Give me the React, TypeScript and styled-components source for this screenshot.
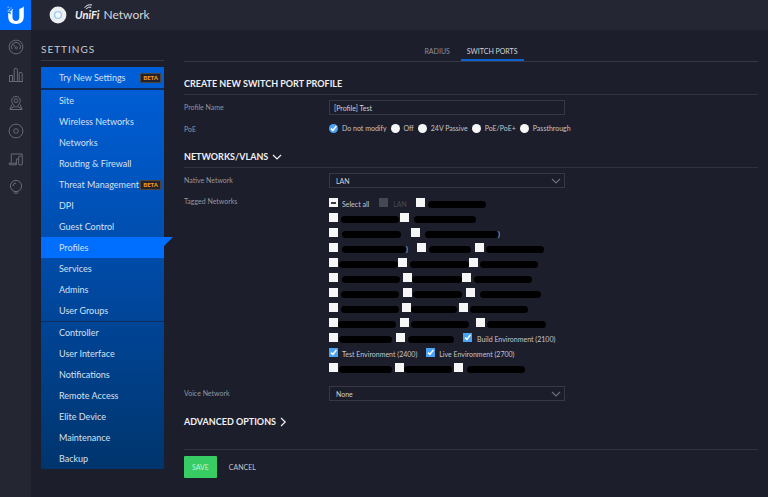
import React from "react";
import styled, { createGlobalStyle, css } from "styled-components";

const GlobalStyle = createGlobalStyle`
  *, *::before, *::after { box-sizing: border-box; }
  body {
    margin: 0;
    background: #1c1e2c;
    color: #c3c5cb;
    font-family: Lato, "Open Sans", sans-serif;
    font-size: 7px;
    line-height: 12px;
  }
  button, input, select { font: inherit; color: inherit; margin: 0; }
  ul { list-style: none; margin: 0; padding: 0; }
`;

const Shell = styled.div`
  display: grid;
  grid-template-columns: 31px minmax(0, 1fr);
  min-height: 100vh;
`;

const Rail = styled.nav`
  display: flex;
  flex-direction: column;
  align-items: center;
  background: #242632;
`;

const BrandLink = styled.a`
  display: flex;
  align-items: center;
  justify-content: center;
  width: 100%;
  height: 30px;
  margin-bottom: 3px;
  background: #006fff;
`;

const RailLink = styled.a`
  display: flex;
  align-items: center;
  justify-content: center;
  width: 100%;
  height: 28px;
  color: #686a75;
`;

const Header = styled.header`
  display: flex;
  align-items: center;
  gap: 8px;
  height: 30px;
  padding-left: 18px;
  background: #242634;
`;

const Product = styled.div`
  display: flex;
  align-items: baseline;
  gap: 4px;
  color: #d6d7da;
  font-size: 12px;
  line-height: 16px;
`;

const Wordmark = styled.span`
  position: relative;
  color: #f1f1f3;
  font-size: 11px;
  font-style: italic;
  font-weight: 700;

  svg {
    position: absolute;
    top: -3px;
    left: 9px;
  }
`;

const Body = styled.div`
  display: grid;
  grid-template-columns: 123px minmax(0, 1fr);
  gap: 20px;
  padding: 0 10px;
`;

const Sidebar = styled.aside`
  padding-top: 12px;
`;

const SidebarTitle = styled.h1`
  margin: 0 0 6px;
  padding-bottom: 4px;
  border-bottom: 1px solid #373944;
  color: #c9cace;
  font-size: 10px;
  font-weight: 400;
  letter-spacing: 1px;
  line-height: 14px;
`;

const Menu = styled.div`
  background: linear-gradient(#005fd9, #0056c2 25%, #0048a0 55%, #00356d);
`;

const MenuGroup = styled.ul<{ $rule?: number }>`
  border-bottom: ${(p) => p.$rule ?? 0}px solid #0b2c5c;
`;

const MenuLink = styled.a<{ $active?: boolean }>`
  position: relative;
  display: flex;
  align-items: center;
  justify-content: space-between;
  height: 21px;
  padding: 0 3px 0 18px;
  color: #d5e0f1;
  font-size: 9px;
  text-decoration: none;
  white-space: nowrap;

  ${(p) =>
    p.$active &&
    css`
      background: #006fff;

      &::after {
        content: "";
        position: absolute;
        top: 0;
        left: 100%;
        border-top: 9px solid #006fff;
        border-right: 9px solid transparent;
      }
    `}
`;

const Beta = styled.span`
  padding: 0 2px;
  border: 1px solid #4f4433;
  border-radius: 1px;
  background: #202230;
  color: #f09a14;
  font-size: 6px;
  font-weight: 900;
  line-height: 8px;
`;

const Content = styled.main`
  min-width: 0;
`;

const Tabs = styled.div`
  display: flex;
  justify-content: center;
  gap: 5px;
  padding-top: 15px;
  border-bottom: 1px solid #363843;
`;

const Tab = styled.button<{ $active?: boolean }>`
  padding: 0 6px 1px;
  border: 0;
  border-bottom: 2px solid ${(p) => (p.$active ? "#0d62d2" : "transparent")};
  background: none;
  color: ${(p) => (p.$active ? "#d3d4d9" : "#8d8f98")};
  line-height: 13px;
`;

const SectionTitle = styled.h2<{ $ruled?: boolean; $top: number }>`
  display: flex;
  align-items: center;
  margin: ${(p) => p.$top}px 0 0;
  padding-bottom: 3px;
  border-bottom: 1px solid ${(p) => (p.$ruled ? "#30323e" : "transparent")};
  color: #f0f0f2;
  font-size: 9px;
  font-weight: 700;
  line-height: 14px;
`;

const Toggle = styled.button`
  display: flex;
  align-items: center;
  gap: 4px;
  padding: 0;
  border: 0;
  background: none;
  line-height: 14px;
`;

const Field = styled.div<{ $top: number }>`
  display: grid;
  grid-template-columns: 145px minmax(0, 1fr);
  align-items: start;
  margin-top: ${(p) => p.$top}px;
`;

const fieldName = css`
  padding-top: 1px;
  color: #94969f;
`;

const FieldLabel = styled.label`
  ${fieldName}
`;

const GroupLabel = styled.span`
  ${fieldName}
`;

const control = css`
  width: 100%;
  height: 15px;
  border: 1px solid #363844;
  border-radius: 0;
  outline: 0;
  background: #1b1d2b;
  color: #d0d2d6;
`;

const TextInput = styled.input`
  ${control}
  max-width: 236px;
  padding: 0 4px;
`;

const SelectBox = styled.div`
  position: relative;
  max-width: 236px;
  height: 15px;

  svg {
    position: absolute;
    top: 5px;
    right: 4px;
    color: #6c6e79;
    pointer-events: none;
  }
`;

const Select = styled.select`
  ${control}
  appearance: none;
  padding: 0 6px;
`;

const tick =
  "url(\"data:image/svg+xml,%3Csvg xmlns='http://www.w3.org/2000/svg' viewBox='0 0 9 9'%3E%3Cpath d='M2 4.6 3.9 6.4 7.4 2' fill='none' stroke='white' stroke-width='1.5'/%3E%3C/svg%3E\")";

const Radio = styled.input.attrs({ type: "radio" })`
  appearance: none;
  flex: none;
  width: 9px;
  height: 9px;
  border-radius: 50%;
  background: #f6f6f7;

  &:checked {
    background: ${tick} #4ba3f5;
  }
`;

const Check = styled.input.attrs({ type: "checkbox" })`
  appearance: none;
  flex: none;
  width: 9px;
  height: 9px;
  background: #f6f6f7;

  &:checked {
    background: ${tick} #4ba3f5;
  }
  &:indeterminate {
    background: linear-gradient(#3b3c45, #3b3c45) center / 5px 2px no-repeat #f6f6f7;
  }
  &:disabled {
    background: #454751;
  }
`;

const RadioRow = styled.div`
  display: flex;
  gap: 4px;
`;

const RadioLabel = styled.label`
  display: flex;
  align-items: center;
  gap: 4px;
  white-space: nowrap;
`;

const Options = styled.div`
  display: grid;
  grid-auto-rows: 15px;
  padding-top: 4px;
`;

const OptionRow = styled.div`
  display: flex;
  align-items: flex-start;
`;

const Option = styled.label<{ $lead: number; $gap: number; $muted?: boolean }>`
  display: flex;
  gap: ${(p) => p.$gap}px;
  margin-left: ${(p) => p.$lead}px;
  color: ${(p) => (p.$muted ? "#484a55" : "inherit")};
  white-space: nowrap;
`;

const OptionText = styled.span`
  padding-top: 1px;
  line-height: 10px;
`;

const Redacted = styled.span<{ $width: number }>`
  width: ${(p) => p.$width}px;
  height: 7px;
  margin-top: 3px;
  border-radius: 4px;
  background: #000;
`;

const Spacer = styled.span<{ $width: number }>`
  width: ${(p) => p.$width}px;
`;

const Actions = styled.div`
  display: flex;
  align-items: center;
  gap: 12px;
  margin-top: 16px;
  padding: 6px 0 16px;
  border-top: 1px solid #30323e;
`;

const SaveButton = styled.button`
  height: 22px;
  padding: 0 8px;
  border: 0;
  border-radius: 1px;
  background: #38cc65;
  color: #c4f2d1;
`;

const CancelButton = styled.button`
  padding: 0;
  border: 0;
  background: none;
`;

type MenuItem = { label: string; beta?: boolean; active?: boolean };

const menu: { rule?: number; items: MenuItem[] }[] = [
  { rule: 2, items: [{ label: "Try New Settings", beta: true }] },
  {
    rule: 1,
    items: [
      { label: "Site" },
      { label: "Wireless Networks" },
      { label: "Networks" },
      { label: "Routing & Firewall" },
      { label: "Threat Management", beta: true },
      { label: "DPI" },
      { label: "Guest Control" },
      { label: "Profiles", active: true },
      { label: "Services" },
      { label: "Admins" },
      { label: "User Groups" },
    ],
  },
  {
    items: [
      { label: "Controller" },
      { label: "User Interface" },
      { label: "Notifications" },
      { label: "Remote Access" },
      { label: "Elite Device" },
      { label: "Maintenance" },
      { label: "Backup" },
    ],
  },
];

type Network = {
  lead?: number;
  gap?: number;
  text?: string;
  hidden?: number;
  state?: "checked" | "mixed" | "disabled";
};

const networks: Network[][] = [
  [
    { text: "Select all", gap: 4, state: "mixed" },
    { text: "LAN", lead: 10, gap: 5, state: "disabled" },
    { hidden: 58, lead: 9, gap: 3 },
  ],
  [{ hidden: 58, gap: 3 }, { hidden: 62, lead: 1, gap: 5 }],
  [{ hidden: 59, gap: 4 }, { hidden: 73, lead: 10, gap: 5, text: ")" }],
  [{ hidden: 64, gap: 4, text: ")" }, { hidden: 42, lead: 9, gap: 3 }, { hidden: 58, lead: 4, gap: 2 }],
  [{ hidden: 59, gap: 1 }, { hidden: 59, gap: 3 }, { hidden: 58, gap: 2 }],
  [{ hidden: 58, gap: 4 }, { hidden: 50, lead: 3, gap: 0 }, { hidden: 58, gap: 3 }],
  [{ hidden: 58, gap: 3 }, { hidden: 49, lead: 4, gap: 1 }, { hidden: 61, lead: 4, gap: 5 }],
  [{ hidden: 58, gap: 3 }, { hidden: 46, lead: 3, gap: 0 }, { hidden: 58, lead: 2, gap: 2 }],
  [{ hidden: 58, gap: 0 }, { hidden: 58, lead: 4, gap: 2 }, { hidden: 59, lead: 7, gap: 2 }],
  [
    { hidden: 53, gap: 1 },
    { hidden: 46, lead: 4, gap: 3 },
    { text: "Build Environment (2100)", lead: 9, gap: 5, state: "checked" },
  ],
  [
    { text: "Test Environment (2400)", gap: 4, state: "checked" },
    { text: "Live Environment (2700)", lead: 9, gap: 4, state: "checked" },
  ],
  [{ hidden: 53, gap: 1 }, { hidden: 48, lead: 3, gap: 0 }, { hidden: 58, lead: 2, gap: 4 }],
];

const poeModes = ["Do not modify", "Off", "24V Passive", "PoE/PoE+", "Passthrough"];

const Chevron = ({ right = false }: { right?: boolean }) => (
  <svg width={right ? 7 : 10} height={right ? 10 : 6} viewBox={right ? "0 0 7 10" : "0 0 10 6"} fill="none" stroke="currentColor">
    <path d={right ? "M1 1 5.2 5 1 9" : "M1 1 5 5 9 1"} strokeWidth="1.2" />
  </svg>
);

const railIcons: { name: string; art: React.ReactNode }[] = [
  {
    name: "Dashboard",
    art: (
      <>
        <circle cx="8" cy="8" r="6.9" />
        <path d="M4.2 10.3A4.5 4.5 0 1 1 11.8 10.3M5 5.5 7.6 8" />
        <circle cx="8.4" cy="8.8" r="1.1" />
      </>
    ),
  },
  {
    name: "Statistics",
    art: (
      <>
        <rect x="1.5" y="8.5" width="3" height="6" />
        <rect x="6.2" y="1.5" width="3.2" height="13" rx="0.8" />
        <rect x="11.2" y="5.5" width="3" height="9" rx="0.8" />
        <path d="M1 14.5H15" />
      </>
    ),
  },
  {
    name: "Map",
    art: (
      <>
        <path d="M8 12.5C5.2 9.8 3.7 7.8 3.7 5.6A4.3 4.3 0 0 1 12.3 5.6C12.3 7.8 10.8 9.8 8 12.5Z" />
        <circle cx="8" cy="5.7" r="1.9" />
        <path d="M4 9.5 1.8 14.5H14.2L12 9.5M2.5 13.8 6.5 11.2M13.5 13.8 9.5 11.2" />
      </>
    ),
  },
  {
    name: "Devices",
    art: (
      <>
        <circle cx="8" cy="8" r="6.9" />
        <circle cx="8" cy="8" r="2.3" />
      </>
    ),
  },
  {
    name: "Clients",
    art: (
      <>
        <path d="M3.3 11.8V3H14.2V5M1 12.2H8V13.8H2Q1 13.8 1 12.2Z" />
        <rect x="10.7" y="5.2" width="3.6" height="8.6" rx="0.6" />
        <path d="M8.4 13.8V8.1H10.7" />
      </>
    ),
  },
  {
    name: "Insights",
    art: (
      <>
        <circle cx="8" cy="7" r="5.6" />
        <path d="M6 12.3 6.7 14.3H9.3L10 12.3M5 7A3 3 0 0 1 8 4" />
      </>
    ),
  },
];

const BrandMark = () => (
  <svg width="20" height="20" viewBox="0 0 18 18" fill="#fff">
    <path d="M5.8 5V10.5C5.8 12.8 6.8 14.2 9 14.5 11.2 14.2 12 12.8 12 10.5V3.6C13.5 3.4 15 2.5 16 1.2V10.5C16 14.8 13.2 17 9.1 17 4.8 17 2 14.8 2 10.5V7.2H3.2V8.4H4.2V5Z" />
    <path d="M1.5 1.5h1v1h-1zM4 2.2h1v1H4zM2.5 3.5h1.2v1.2H2.5zM1.5 5h1v1h-1zM5.2 3.6h1v1.4h-1zM3.2 5.4h1v1h-1z" opacity="0.8" />
  </svg>
);

const AccessPoint = () => (
  <svg width="18" height="18" viewBox="0 0 18 18">
    <circle cx="9" cy="9" r="8.4" fill="#edeef0" />
    <circle cx="9" cy="9" r="3.4" fill="#f4f8fc" stroke="#9dcdf3" strokeWidth="1.4" />
  </svg>
);

const NetworkOption = ({ lead = 0, gap = 0, text, hidden, state }: Network) => (
  <Option $lead={lead} $gap={hidden && text ? 0 : gap} $muted={state === "disabled"}>
    <Check
      defaultChecked={state === "checked"}
      disabled={state === "disabled"}
      aria-label={hidden ? "Hidden network" : undefined}
      ref={(el) => {
        if (el) el.indeterminate = state === "mixed";
      }}
    />
    {hidden && text ? <Spacer $width={gap} /> : null}
    {hidden ? <Redacted $width={hidden} /> : null}
    {text ? <OptionText>{text}</OptionText> : null}
  </Option>
);

export default function App() {
  return (
    <>
      <GlobalStyle />
      <Shell>
        <Rail>
          <BrandLink href="#home" aria-label="Home">
            <BrandMark />
          </BrandLink>
          {railIcons.map(({ name, art }) => (
            <RailLink key={name} href={`#${name.toLowerCase()}`} aria-label={name}>
              <svg width="16" height="16" viewBox="0 0 16 16" fill="none" stroke="currentColor">
                {art}
              </svg>
            </RailLink>
          ))}
        </Rail>
        <div>
          <Header>
            <AccessPoint />
            <Product>
              <Wordmark>
                UniFi
                <svg width="9" height="6" viewBox="0 0 9 6" fill="none" stroke="currentColor">
                  <path d="M0.6 3.8C2.2 1.3 5 .3 8 1M2 5.2C3.3 3.4 5.2 2.8 7.2 3.3" />
                </svg>
              </Wordmark>
              <span>Network</span>
            </Product>
          </Header>
          <Body>
            <Sidebar>
              <SidebarTitle>SETTINGS</SidebarTitle>
              <Menu>
                {menu.map(({ rule, items }) => (
                  <MenuGroup key={items[0].label} $rule={rule}>
                    {items.map(({ label, beta, active }) => (
                      <li key={label}>
                        <MenuLink href="#settings" $active={active}>
                          {label}
                          {beta && <Beta>BETA</Beta>}
                        </MenuLink>
                      </li>
                    ))}
                  </MenuGroup>
                ))}
              </Menu>
            </Sidebar>
            <Content>
              <Tabs>
                <Tab type="button">RADIUS</Tab>
                <Tab type="button" $active>
                  SWITCH PORTS
                </Tab>
              </Tabs>

              <SectionTitle $ruled $top={15}>
                CREATE NEW SWITCH PORT PROFILE
              </SectionTitle>
              <Field $top={5}>
                <FieldLabel htmlFor="profile-name">Profile Name</FieldLabel>
                <TextInput id="profile-name" type="text" defaultValue="[Profile] Test" />
              </Field>
              <Field $top={7}>
                <GroupLabel id="poe-label">PoE</GroupLabel>
                <RadioRow role="radiogroup" aria-labelledby="poe-label">
                  {poeModes.map((mode, i) => (
                    <RadioLabel key={mode}>
                      <Radio name="poe" defaultChecked={i === 0} />
                      {mode}
                    </RadioLabel>
                  ))}
                </RadioRow>
              </Field>

              <SectionTitle $ruled $top={15}>
                <Toggle type="button" aria-expanded="true">
                  NETWORKS/VLANS <Chevron />
                </Toggle>
              </SectionTitle>
              <Field $top={5}>
                <FieldLabel htmlFor="native">Native Network</FieldLabel>
                <SelectBox>
                  <Select id="native">
                    <option>LAN</option>
                  </Select>
                  <Chevron />
                </SelectBox>
              </Field>
              <Field $top={6}>
                <GroupLabel>Tagged Networks</GroupLabel>
                <Options role="group" aria-label="Tagged Networks">
                  {networks.map((row, r) => (
                    <OptionRow key={r}>
                      {row.map((network, c) => (
                        <NetworkOption key={c} {...network} />
                      ))}
                    </OptionRow>
                  ))}
                </Options>
              </Field>
              <Field $top={8}>
                <FieldLabel htmlFor="voice">Voice Network</FieldLabel>
                <SelectBox>
                  <Select id="voice">
                    <option>None</option>
                  </Select>
                  <Chevron />
                </SelectBox>
              </Field>

              <SectionTitle $top={14}>
                <Toggle type="button" aria-expanded="false">
                  ADVANCED OPTIONS <Chevron right />
                </Toggle>
              </SectionTitle>
              <Actions>
                <SaveButton type="button">SAVE</SaveButton>
                <CancelButton type="button">CANCEL</CancelButton>
              </Actions>
            </Content>
          </Body>
        </div>
      </Shell>
    </>
  );
}
